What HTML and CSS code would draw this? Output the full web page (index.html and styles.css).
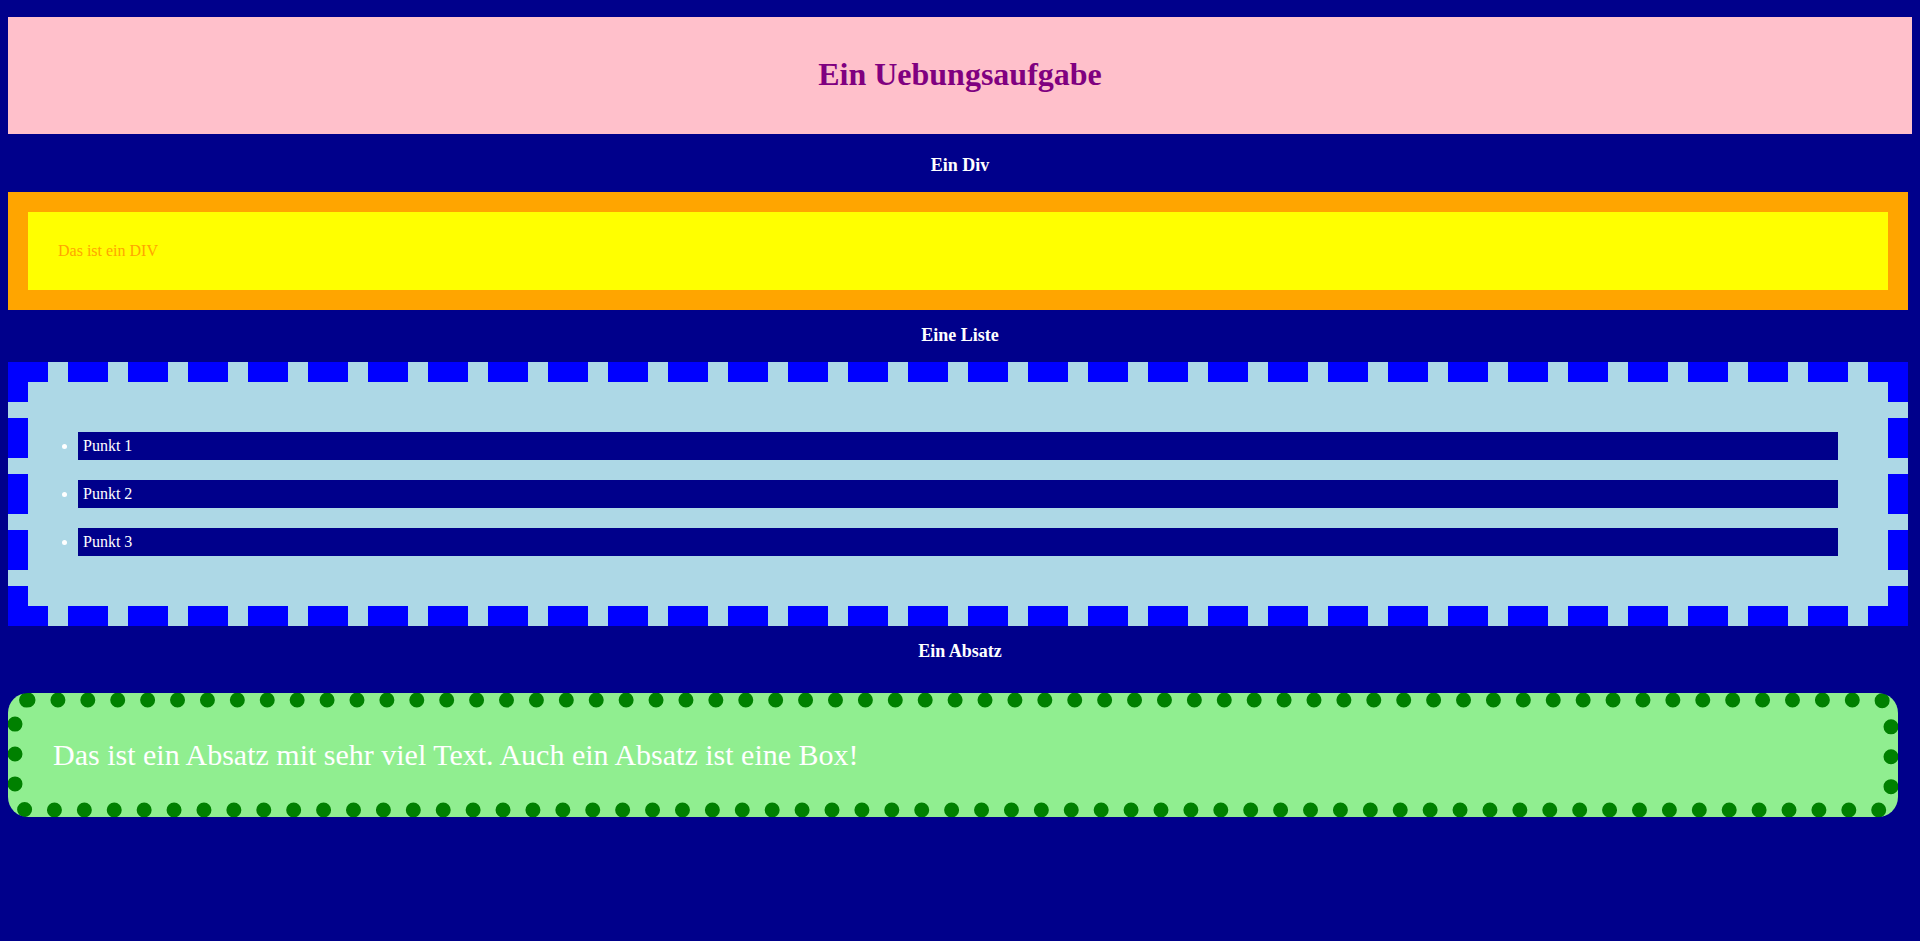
FILE: index.html
```html
<!DOCTYPE html>
<html lang="de">
<head>
<meta charset="utf-8">
<title>Ein Uebungsaufgabe</title>
<link rel="stylesheet" href="styles.css">
</head>
<body>
<header class="kopf">
  <h1 class="titel">Ein Uebungsaufgabe</h1>
</header>
<h3 class="ueberschrift">Ein Div</h3>
<div class="divbox">Das ist ein DIV</div>
<h3 class="ueberschrift">Eine Liste</h3>
<div class="listbox">
  <ul class="liste">
    <li class="punkt">Punkt 1</li>
    <li class="punkt">Punkt 2</li>
    <li class="punkt">Punkt 3</li>
  </ul>
</div>
<h3 class="ueberschrift">Ein Absatz</h3>
<p class="absatz">Das ist ein Absatz mit sehr viel Text. Auch ein Absatz ist eine Box!</p>
</body>
</html>
```
FILE: styles.css
```css
html {
  background: #00008b;
}
body {
  margin: 0;
  padding: 17px 8px 40px 8px;
  display: flex;
  flex-direction: column;
  background: #00008b;
  font-family: "Liberation Serif", "Times New Roman", serif;
  font-size: 16px;
  min-height: 941px;
  box-sizing: border-box;
}
.kopf {
  background: #ffc0cb;
  padding: 39px 0 41px 0;
  margin: 0 0 6px 0;
  text-align: center;
}
.titel {
  margin: 0;
  font-size: 32px;
  font-weight: bold;
  color: #800080;
}
.ueberschrift {
  margin: 15px 0 16px 0;
  font-size: 18px;
  font-weight: bold;
  color: #ffffff;
  text-align: center;
}
.divbox {
  margin-right: 4px;
  border: 20px solid #ffa500;
  background: #ffff00;
  padding: 30px;
  color: #ffa500;
}
.listbox {
  margin-right: 4px;
  border: 20px dashed #0000ff;
  background: #add8e6;
  padding: 30px;
}
.liste {
  margin: 0;
  padding: 0 20px;
  color: #ffffff;
}
.punkt {
  margin: 20px 0;
  padding: 5px;
  background: #00008b;
  color: #ffffff;
}
.absatz {
  margin: 15px 14px 0 0;
  border: 15px dotted #008000;
  border-radius: 20px;
  background: #90ee90;
  padding: 30px;
  font-size: 30px;
  color: #ffffff;
}
```
